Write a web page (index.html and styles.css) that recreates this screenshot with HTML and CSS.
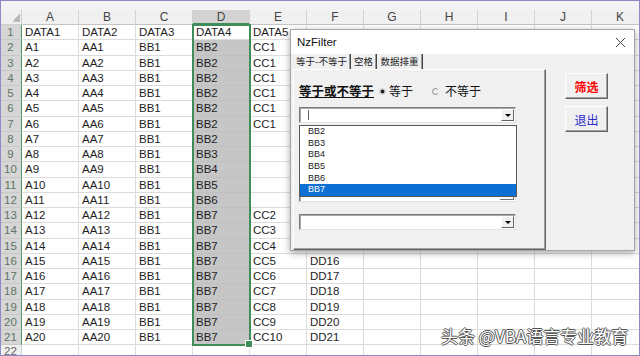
FILE: index.html
```html
<!DOCTYPE html>
<html lang="zh-CN">
<head>
    <meta charset="UTF-8">
    <title>NzFilter</title>
    <link rel="stylesheet" href="styles.css">
</head>
<body>
<div class="frame">
    <div class="topbar"></div>

    <div class="sheet">
        <span class="cr"></span><span class="ch">A</span><span class="ch">B</span><span class="ch">C</span><span class="ch on">D</span><span class="ch">E</span><span class="ch">F</span><span class="ch">G</span><span class="ch">H</span><span class="ch">I</span><span class="ch">J</span><span class="ch">K</span>
        <span class="rh">1</span><span>DATA1</span><span>DATA2</span><span>DATA3</span><span class="act">DATA4</span><span>DATA5</span><span></span><span></span><span></span><span></span><span></span><span></span>
        <span class="rh">2</span><span>A1</span><span>AA1</span><span>BB1</span><span class="s">BB2</span><span>CC1</span><span></span><span></span><span></span><span></span><span></span><span></span>
        <span class="rh">3</span><span>A2</span><span>AA2</span><span>BB1</span><span class="s">BB2</span><span>CC1</span><span></span><span></span><span></span><span></span><span></span><span></span>
        <span class="rh">4</span><span>A3</span><span>AA3</span><span>BB1</span><span class="s">BB2</span><span>CC1</span><span></span><span></span><span></span><span></span><span></span><span></span>
        <span class="rh">5</span><span>A4</span><span>AA4</span><span>BB1</span><span class="s">BB2</span><span>CC1</span><span></span><span></span><span></span><span></span><span></span><span></span>
        <span class="rh">6</span><span>A5</span><span>AA5</span><span>BB1</span><span class="s">BB2</span><span>CC1</span><span></span><span></span><span></span><span></span><span></span><span></span>
        <span class="rh">7</span><span>A6</span><span>AA6</span><span>BB1</span><span class="s">BB2</span><span>CC1</span><span></span><span></span><span></span><span></span><span></span><span></span>
        <span class="rh">8</span><span>A7</span><span>AA7</span><span>BB1</span><span class="s">BB2</span><span></span><span></span><span></span><span></span><span></span><span></span><span></span>
        <span class="rh">9</span><span>A8</span><span>AA8</span><span>BB1</span><span class="s">BB3</span><span></span><span></span><span></span><span></span><span></span><span></span><span></span>
        <span class="rh">10</span><span>A9</span><span>AA9</span><span>BB1</span><span class="s">BB4</span><span></span><span></span><span></span><span></span><span></span><span></span><span></span>
        <span class="rh">11</span><span>A10</span><span>AA10</span><span>BB1</span><span class="s">BB5</span><span></span><span></span><span></span><span></span><span></span><span></span><span></span>
        <span class="rh">12</span><span>A11</span><span>AA11</span><span>BB1</span><span class="s">BB6</span><span></span><span></span><span></span><span></span><span></span><span></span><span></span>
        <span class="rh">13</span><span>A12</span><span>AA12</span><span>BB1</span><span class="s">BB7</span><span>CC2</span><span>DD13</span><span></span><span></span><span></span><span></span><span></span>
        <span class="rh">14</span><span>A13</span><span>AA13</span><span>BB1</span><span class="s">BB7</span><span>CC3</span><span>DD14</span><span></span><span></span><span></span><span></span><span></span>
        <span class="rh">15</span><span>A14</span><span>AA14</span><span>BB1</span><span class="s">BB7</span><span>CC4</span><span>DD15</span><span></span><span></span><span></span><span></span><span></span>
        <span class="rh">16</span><span>A15</span><span>AA15</span><span>BB1</span><span class="s">BB7</span><span>CC5</span><span>DD16</span><span></span><span></span><span></span><span></span><span></span>
        <span class="rh">17</span><span>A16</span><span>AA16</span><span>BB1</span><span class="s">BB7</span><span>CC6</span><span>DD17</span><span></span><span></span><span></span><span></span><span></span>
        <span class="rh">18</span><span>A17</span><span>AA17</span><span>BB1</span><span class="s">BB7</span><span>CC7</span><span>DD18</span><span></span><span></span><span></span><span></span><span></span>
        <span class="rh">19</span><span>A18</span><span>AA18</span><span>BB1</span><span class="s">BB7</span><span>CC8</span><span>DD19</span><span></span><span></span><span></span><span></span><span></span>
        <span class="rh">20</span><span>A19</span><span>AA19</span><span>BB1</span><span class="s">BB7</span><span>CC9</span><span>DD20</span><span></span><span></span><span></span><span></span><span></span>
        <span class="rh">21</span><span>A20</span><span>AA20</span><span>BB1</span><span class="s">BB7</span><span>CC10</span><span>DD21</span><span></span><span></span><span></span><span></span><span></span>
        <span class="rh off">22</span><span></span><span></span><span></span><span></span><span></span><span></span><span></span><span></span><span></span><span></span><span></span>
    </div>

    <div class="selbox"></div>

    <div class="dlg">
        <div class="dlg-title">
            <span>NzFilter</span>
            <svg width="11" height="11" viewBox="0 0 11 11"><path d="M1 1L10 10M10 1L1 10" stroke="#444" stroke-width="1"/></svg>
        </div>
        <div class="dlg-body">
            <div class="tabset">
                <div class="tabs">
                    <span class="tab t1">等于-不等于</span>
                    <span class="tab t2">空格</span>
                    <span class="tab t3">数据排重</span>
                </div>
                <div class="page">
                    <div class="opt">
                        <span class="lbl">等于或不等于</span>
                        <span class="radio r1">
                            <svg width="7" height="7" viewBox="0 0 7 7"><circle cx="3.5" cy="3.5" r="3" fill="none" stroke="#c8c8c8" stroke-width="0.8"/><circle cx="3.5" cy="3.5" r="2" fill="#222"/></svg>
                            等于
                        </span>
                        <span class="radio r2">
                            <svg width="7" height="7" viewBox="0 0 7 7"><path d="M5.6 1.4A3 3 0 1 0 5.6 5.6" fill="none" stroke="#777" stroke-width="0.9"/></svg>
                            不等于
                        </span>
                    </div>
                    <div class="combo">
                        <span class="field"><i class="cursor"></i></span>
                        <span class="dd"><i class="tri"></i></span>
                    </div>
                    <div class="listbox"><span class="lb-bar"></span></div>
                    <div class="combo c2">
                        <span class="field"></span>
                        <span class="dd"><i class="tri"></i></span>
                    </div>
                    <ul class="droplist">
                        <li>BB2</li>
                        <li>BB3</li>
                        <li>BB4</li>
                        <li>BB5</li>
                        <li>BB6</li>
                        <li class="hi">BB7</li>
                    </ul>
                </div>
            </div>
            <div class="btns">
                <button class="btn red">筛选</button>
                <button class="btn blue">退出</button>
            </div>
        </div>
    </div>

    <div class="mark">头条 @VBA语言专业教育</div>
</div>
</body>
</html>
```
FILE: styles.css
```css
* {
    margin: 0;
    padding: 0;
    box-sizing: border-box;
}

body {
    width: 640px;
    height: 356px;
    overflow: hidden;
    font-family: "Liberation Sans", Arial, sans-serif;
}

.frame {
    position: relative;
    width: 640px;
    height: 356px;
    overflow: hidden;
    background: #fff;
}

.frame::after {
    content: "";
    position: absolute;
    inset: 0;
    border: 1px solid #8e8ac8;
    pointer-events: none;
}

.topbar {
    height: 10px;
    background: #f3f3f3;
}

/* worksheet */
.sheet {
    display: grid;
    grid-template-columns: 22px repeat(11, 57px);
    grid-template-rows: 15px;
    grid-auto-rows: 15.25px;
    font-size: 11.5px;
    color: #1e1e1e;
}

.sheet > span {
    border-right: 1px solid #dcdcdc;
    border-bottom: 1px solid #dcdcdc;
    line-height: 15px;
    padding-left: 3px;
    white-space: nowrap;
    overflow: hidden;
}

.sheet > .cr {
    background: #f0f0f0;
    border-color: #cfcfcf;
    display: flex;
    justify-content: flex-end;
    align-items: flex-end;
    padding: 0 1px 2px 0;
}

.cr::after {
    content: "";
    width: 8px;
    height: 8px;
    background: linear-gradient(135deg, transparent 50%, #b8b8b8 50%);
}

.sheet > .ch {
    background: #f0f0f0;
    border-right-color: #d2d2d2;
    border-bottom-color: #c4c4c4;
    text-align: center;
    padding: 0;
    font-size: 12px;
    line-height: 14px;
    color: #444;
}

.sheet > .ch.on {
    background: #d3d3d3;
    border-bottom: 2px solid #3f8d58;
}

.sheet > .rh {
    background: #d6d6d6;
    border-right-color: #4f9a66;
    border-bottom-color: #c8c8c8;
    text-align: center;
    padding: 0;
    color: #5f7464;
}

.sheet > .rh.off {
    background: #f0f0f0;
    border-right-color: #d2d2d2;
    line-height: 12px;
    color: #666;
}

.sheet > .s {
    background: #c6c6c6;
    border-bottom-color: #c0c0c0;
}

.selbox {
    position: absolute;
    left: 192px;
    top: 24px;
    width: 59px;
    height: 322px;
    border: 2px solid #3f8d58;
}

.selbox::after {
    content: "";
    position: absolute;
    right: -4px;
    bottom: -4px;
    width: 6px;
    height: 6px;
    background: #3f8d58;
    border: 1px solid #fff;
}

/* user form */
.dlg {
    position: absolute;
    left: 290px;
    top: 29px;
    width: 345px;
    height: 222px;
    border: 1px solid #a6a6a6;
    background: #f0f0f0;
    box-shadow: 0 2px 7px rgba(0, 0, 0, 0.35);
    display: flex;
    flex-direction: column;
}

.dlg-title {
    height: 24px;
    background: #fff;
    display: flex;
    align-items: center;
    justify-content: space-between;
    padding: 0 8px 0 6px;
    font-size: 11.5px;
    color: #111;
}

.dlg-body {
    flex: 1;
    display: flex;
    padding-left: 2px;
    font-family: "Noto Sans CJK SC", sans-serif;
}

.tabset {
    width: 253px;
    display: flex;
    flex-direction: column;
}

.tabs {
    height: 15px;
    display: flex;
    font-size: 9.5px;
}

.tab {
    border-right: 1px solid #444;
    box-shadow: inset -1px 0 #9a9a9a;
    text-align: center;
    line-height: 15px;
    color: #222;
}

.t1 { width: 58px; }
.t2 { width: 26px; }
.t3 { width: 46px; }

.page {
    flex: 1;
    position: relative;
    border-top: 1px solid #fff;
    border-left: 1px solid #fff;
    border-right: 1px solid #646464;
    border-bottom: 1px solid #646464;
    box-shadow: inset -1px -1px #a0a0a0;
    padding: 13px 0 0 5px;
}

.opt {
    height: 16px;
    display: flex;
    align-items: center;
    font-size: 12px;
    line-height: 16px;
    color: #111;
}

.lbl {
    width: 80px;
    font-size: 12.5px;
    font-weight: bold;
    text-decoration: underline;
}

.radio {
    display: flex;
    align-items: center;
}

.radio svg { margin-right: 3px; }
.r2 { margin-left: 19px; }
.r2 svg { margin-right: 6px; }

.combo {
    margin-top: 8px;
    width: 217px;
    height: 16px;
    display: flex;
    background: #fff;
    border: 1px solid;
    border-color: #7c7c7c #e3e3e3 #e3e3e3 #7c7c7c;
    box-shadow: inset 1px 1px #a8a8a8;
}

.combo.c2 { margin-top: 12px; }

.field { flex: 1; }

.cursor {
    display: block;
    width: 1px;
    height: 10px;
    margin: 2px 0 0 8px;
    background: #666;
}

.dd {
    width: 13px;
    margin: 1px 1px 1px 0;
    background: #f0f0f0;
    border: 1px solid;
    border-color: #fff #646464 #646464 #fff;
    display: flex;
    align-items: center;
    justify-content: center;
}

.tri {
    width: 0;
    height: 0;
    border-left: 3px solid transparent;
    border-right: 3px solid transparent;
    border-top: 3px solid #000;
}

.listbox {
    margin-top: 2px;
    width: 217px;
    height: 77px;
    background: #fff;
    border: 1px solid;
    border-color: #7c7c7c #e3e3e3 #e3e3e3 #7c7c7c;
    box-shadow: inset 1px 1px #a8a8a8;
    display: flex;
    justify-content: flex-end;
    align-items: flex-end;
}

.lb-bar {
    width: 14px;
    height: 3px;
    border-right: 1px solid #777;
    border-bottom: 1px solid #777;
    margin: 0 1px 1px 0;
}

.droplist {
    position: absolute;
    left: 5px;
    top: 55px;
    width: 218px;
    list-style: none;
    background: #fff;
    border: 1px solid #5a5a5a;
    font-family: "Liberation Sans", Arial, sans-serif;
    font-size: 9px;
}

.droplist li {
    height: 11.7px;
    line-height: 11.7px;
    padding-left: 8px;
    color: #222;
}

.droplist li.hi {
    background: #0b6fd4;
    color: #fff;
}

.btns {
    margin-left: 19px;
    padding-top: 19px;
    display: flex;
    flex-direction: column;
    gap: 7px;
}

.btn {
    width: 43px;
    height: 26px;
    background: #f0f0f0;
    border: 1px solid;
    border-color: #fff #646464 #646464 #fff;
    box-shadow: inset -1px -1px #a0a0a0;
    font-family: "Noto Sans CJK SC", sans-serif;
    font-size: 12px;
}

.btn.red {
    color: #ff0000;
    font-weight: bold;
}

.btn.blue {
    color: #2a2ad0;
}

.mark {
    position: absolute;
    left: 441px;
    top: 325px;
    font-family: "Noto Sans CJK SC", sans-serif;
    font-size: 17px;
    line-height: 22px;
    white-space: nowrap;
    color: #fff;
    text-shadow: 1px 0 #555, -1px 0 #555, 0 1px #555, 0 -1px #555;
}
```
